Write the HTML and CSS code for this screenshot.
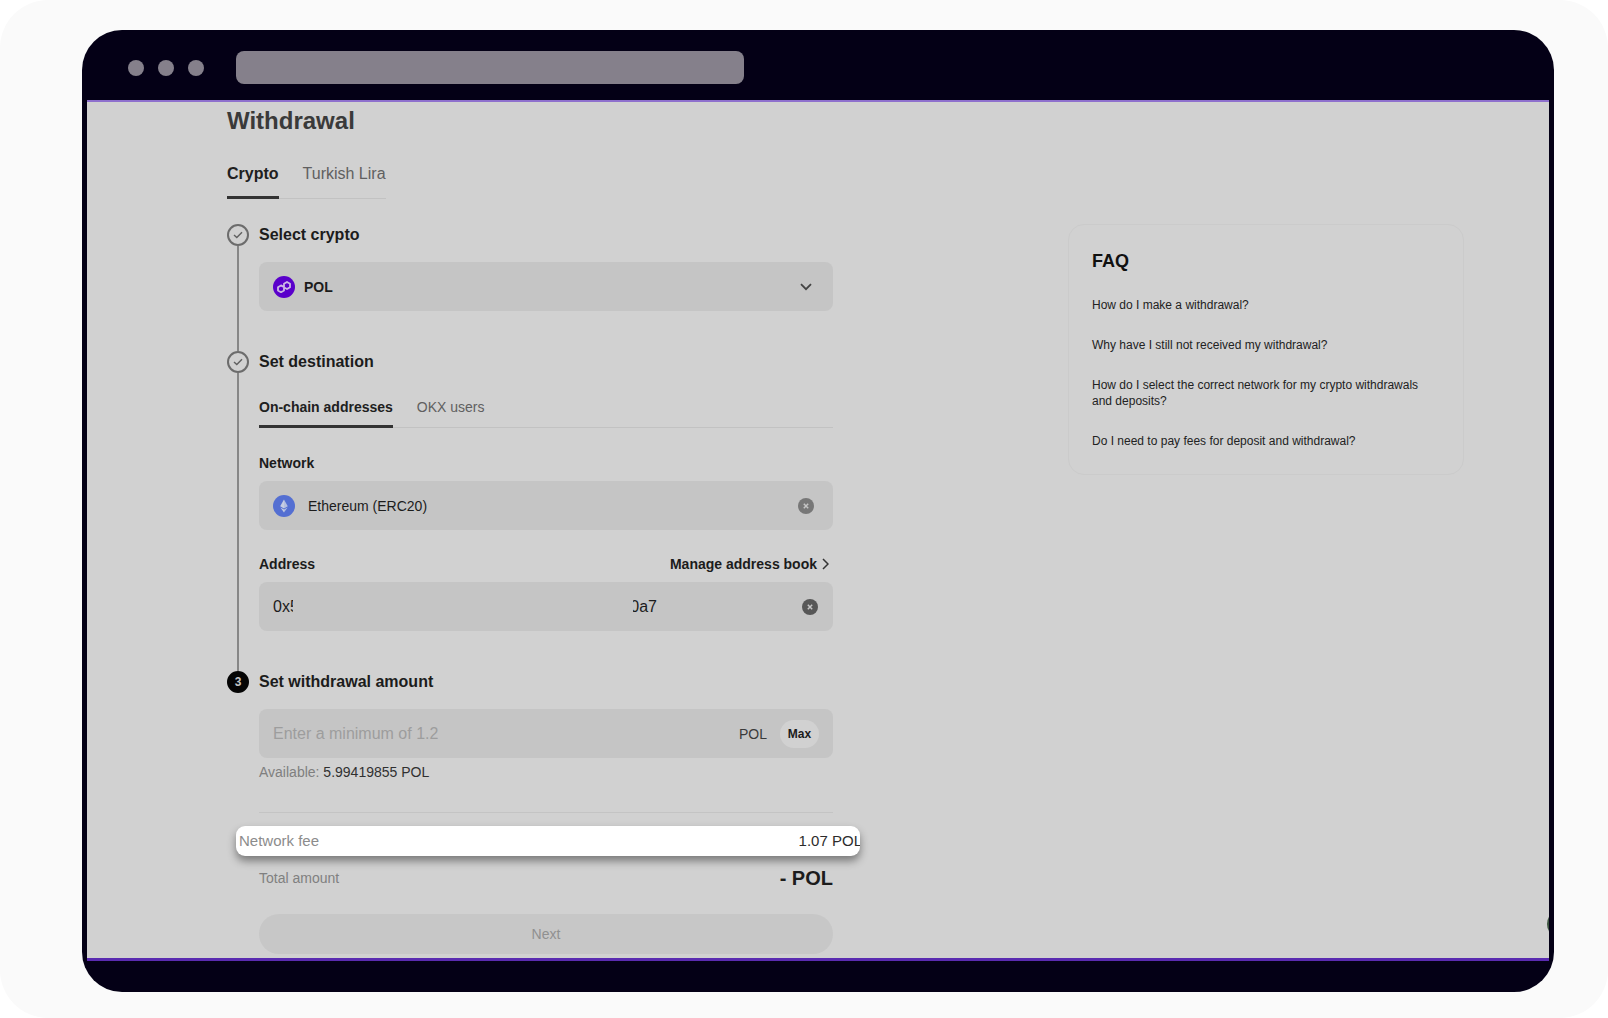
FILE: index.html
```html
<!DOCTYPE html>
<html lang="en">
    <head>
        <meta charset="utf-8">
        <title>Withdrawal</title>
        <link rel="stylesheet" href="styles.css">
    </head>
    <body>
        <div class="backdrop">
            <div class="window">
                <div class="toolbar">
                    <span class="dot"></span>
                    <span class="dot"></span>
                    <span class="dot"></span>
                    <div class="url-bar"></div>
                </div>

                <main class="page">
                    <h1>Withdrawal</h1>
                    <nav class="tabs main-tabs">
                        <a href="#" class="tab active">Crypto</a>
                        <a href="#" class="tab">Turkish Lira</a>
                    </nav>

                    <div class="columns">
                        <form class="steps">
                            <section class="step">
                                <div class="marker">
                                    <span class="circle">
                                        <svg width="10" height="8" viewBox="0 0 10 8"><path d="M1 4l2.8 2.6L9 1.2" fill="none" stroke="#606060" stroke-width="1.4"/></svg>
                                    </span>
                                    <span class="line"></span>
                                </div>
                                <div class="step-body">
                                    <h2><label for="crypto">Select crypto</label></h2>
                                    <div class="field">
                                        <svg width="22" height="22" viewBox="0 0 22 22">
                                            <circle cx="11" cy="11" r="11" fill="#5a00cb"/>
                                            <path d="M10.2 10.6L8 9.4 5 11.2v3.2l3 1.8 3-1.8V7.8L14 6l3 1.8v3.4L14 13l-2.2-1.2" fill="none" stroke="#cdb9e4" stroke-width="1.8" stroke-linejoin="round"/>
                                        </svg>
                                        <select id="crypto" class="crypto-select">
                                            <option>POL</option>
                                        </select>
                                        <svg class="chevron" width="12" height="8" viewBox="0 0 12 8"><path d="M1 1.2l5 5 5-5" fill="none" stroke="#444" stroke-width="1.8"/></svg>
                                    </div>
                                </div>
                            </section>

                            <section class="step">
                                <div class="marker">
                                    <span class="circle">
                                        <svg width="10" height="8" viewBox="0 0 10 8"><path d="M1 4l2.8 2.6L9 1.2" fill="none" stroke="#606060" stroke-width="1.4"/></svg>
                                    </span>
                                    <span class="line"></span>
                                </div>
                                <div class="step-body">
                                    <h2>Set destination</h2>
                                    <nav class="tabs sub-tabs">
                                        <a href="#" class="tab active">On-chain addresses</a>
                                        <a href="#" class="tab">OKX users</a>
                                    </nav>

                                    <div class="label-row">
                                        <label for="network">Network</label>
                                    </div>
                                    <div class="field">
                                        <svg width="22" height="22" viewBox="0 0 22 22">
                                            <circle cx="11" cy="11" r="11" fill="#546fd2"/>
                                            <path d="M11 4.5L7.2 11.2 11 13.4z" fill="#c6cde2"/>
                                            <path d="M11 4.5l3.8 6.7L11 13.4z" fill="#b4bfe0"/>
                                            <path d="M7.4 12.4L11 17.5v-3z" fill="#c6cde2"/>
                                            <path d="M14.6 12.4L11 17.5v-3z" fill="#b4bfe0"/>
                                        </svg>
                                        <input id="network" class="network-input" type="text" value="Ethereum (ERC20)">
                                        <button type="button" class="clear clear-network" aria-label="Clear network">
                                            <svg width="16" height="16" viewBox="0 0 16 16"><circle cx="8" cy="8" r="8" fill="currentColor"/><path d="M5.8 5.8l4.4 4.4M10.2 5.8l-4.4 4.4" stroke="#c5c5c5" stroke-width="1.5"/></svg>
                                        </button>
                                    </div>

                                    <div class="label-row">
                                        <label for="address">Address</label>
                                        <a href="#" class="manage">Manage address book
                                            <svg width="7" height="12" viewBox="0 0 7 12"><path d="M1 1l5 5-5 5" fill="none" stroke="#333" stroke-width="1.5"/></svg>
                                        </a>
                                    </div>
                                    <div class="field">
                                        <input id="address" class="address-start" type="text" value="0x5">
                                        <span class="address-end">0a7</span>
                                        <button type="button" class="clear clear-address" aria-label="Clear address">
                                            <svg width="16" height="16" viewBox="0 0 16 16"><circle cx="8" cy="8" r="8" fill="currentColor"/><path d="M5.8 5.8l4.4 4.4M10.2 5.8l-4.4 4.4" stroke="#c5c5c5" stroke-width="1.5"/></svg>
                                        </button>
                                    </div>
                                </div>
                            </section>

                            <section class="step last">
                                <div class="marker">
                                    <span class="circle current">3</span>
                                </div>
                                <div class="step-body">
                                    <h2><label for="amount">Set withdrawal amount</label></h2>
                                    <div class="field">
                                        <input id="amount" class="amount-input" type="text" placeholder="Enter a minimum of 1.2">
                                        <span class="unit">POL</span>
                                        <button type="button" class="max">Max</button>
                                    </div>
                                    <p class="available">Available: <strong>5.99419855 POL</strong></p>

                                    <div class="fee">
                                        <span>Network fee</span>
                                        <span class="fee-value">1.07 POL</span>
                                    </div>
                                    <div class="total">
                                        <span>Total amount</span>
                                        <strong>- POL</strong>
                                    </div>
                                    <button type="button" class="next">Next</button>
                                </div>
                            </section>
                        </form>

                        <aside class="faq">
                            <h3>FAQ</h3>
                            <a href="#">How do I make a withdrawal?</a>
                            <a href="#">Why have I still not received my withdrawal?</a>
                            <a href="#">How do I select the correct network for my crypto withdrawals and deposits?</a>
                            <a href="#">Do I need to pay fees for deposit and withdrawal?</a>
                        </aside>
                    </div>
                    <span class="chat-bubble"></span>
                </main>
            </div>
        </div>
    </body>
</html>
```
FILE: styles.css
```css
* {
    box-sizing: border-box;
}
body {
    margin: 0;
    background: #fff;
    color: #1c1c1c;
    font-family: "Liberation Sans", Arial, Helvetica, sans-serif;
    font-size: 14px;
    line-height: 20px;
}
h1, h2, h3, p {
    margin: 0;
}
a {
    color: inherit;
    text-decoration: none;
}
input, select, button {
    font: inherit;
    color: inherit;
    background: none;
    border: 0;
    padding: 0;
    min-width: 0;
}
svg {
    display: block;
    flex: none;
}
.backdrop {
    background: #fafafa;
    border-radius: 48px;
    padding: 30px 54px 26px 82px;
}

/* browser window */
.window {
    background: #040016;
    border-radius: 40px;
    padding: 0 5px 31px;
}
.toolbar {
    display: flex;
    align-items: center;
    gap: 14px;
    height: 70px;
    padding: 5px 41px 0;
}
.dot {
    width: 16px;
    height: 16px;
    border-radius: 50%;
    background: #85808b;
}
.url-bar {
    width: 508px;
    height: 33px;
    margin-left: 18px;
    border-radius: 8px;
    background: #85808b;
}
.page {
    position: relative;
    overflow: hidden;
    background: #d1d1d1;
    border-top: 2px solid #8e70cd;
    border-bottom: 3px solid #5a2bb0;
    padding: 5px 85px 4px 140px;
}
h1 {
    font-size: 24px;
    line-height: 28px;
    font-weight: 600;
    color: #3a3a3a;
}

/* tabs */
.tabs {
    display: flex;
    gap: 24px;
    box-shadow: inset 0 -1px #c2c2c2;
    color: #606060;
}
.tab {
    border-bottom: 3px solid transparent;
}
.tab.active {
    border-color: #333;
    color: #202020;
    font-weight: 600;
}
.main-tabs {
    width: fit-content;
    margin: 29px 0 25px;
    font-size: 16px;
}
.main-tabs .tab {
    padding-bottom: 12px;
}
.sub-tabs {
    margin: 23px 0 25px;
}
.sub-tabs .tab {
    padding: 1px 0 8px;
}

.columns {
    display: grid;
    grid-template-columns: minmax(0, 606px) minmax(0, 396px);
    justify-content: space-between;
    align-items: start;
    gap: 40px;
}

/* steps */
.step {
    display: grid;
    grid-template-columns: 22px 1fr;
    gap: 10px;
}
.step-body {
    min-width: 0;
    padding-bottom: 40px;
}
.last .step-body {
    padding-bottom: 0;
}
.marker {
    display: flex;
    flex-direction: column;
    align-items: center;
}
.circle {
    display: flex;
    align-items: center;
    justify-content: center;
    flex: none;
    width: 22px;
    height: 22px;
    border: 2px solid #6c6c6c;
    border-radius: 50%;
    font-size: 12px;
    font-weight: 600;
}
.circle.current {
    background: #050505;
    border-color: #050505;
    color: #c5c5c5;
}
.line {
    flex: 1;
    width: 2px;
    background: #878787;
}
h2 {
    margin-bottom: 16px;
    font-size: 16px;
    line-height: 22px;
    font-weight: 600;
}
.field {
    display: flex;
    align-items: center;
    height: 49px;
    padding: 0 14px;
    border-radius: 8px;
    background: #c5c5c5;
}
.crypto-select {
    flex: 1;
    margin-left: 9px;
    appearance: none;
    font-weight: 600;
}
.chevron {
    margin-right: 7px;
}
.label-row {
    display: flex;
    justify-content: space-between;
    margin-bottom: 8px;
    font-weight: 600;
}
.field + .label-row {
    margin-top: 24px;
}
.network-input {
    flex: 1;
    margin-left: 13px;
}
.clear {
    color: #777;
}
.clear-network {
    margin-right: 5px;
}
.clear-address {
    margin-left: 145px;
    margin-right: 1px;
    color: #575757;
}
.manage {
    display: flex;
    align-items: center;
    gap: 5px;
    padding-right: 4px;
}
/* both ends of the address are cut off around the hidden middle */
.address-start {
    width: 20px;
    font-size: 16px;
}
.address-end {
    display: flex;
    justify-content: flex-end;
    width: 24px;
    margin-left: auto;
    overflow: hidden;
    font-size: 16px;
}
.amount-input {
    flex: 1;
    font-size: 16px;
}
.amount-input::placeholder {
    color: #9d9d9d;
}
.unit {
    margin-right: 13px;
    color: #3a3a3a;
}
.max {
    width: 39px;
    height: 28px;
    border-radius: 14px;
    background: #d1d1d1;
    font-size: 12px;
    font-weight: 600;
}
.available {
    padding: 4px 0 30px;
    border-bottom: 1px solid #c4c4c4;
    color: #7f7f7f;
}
.available strong {
    color: #303030;
    font-weight: 400;
}

/* highlighted row */
.fee {
    display: flex;
    align-items: center;
    justify-content: space-between;
    height: 30px;
    margin: 13px -27px 10px -23px;
    padding-left: 3px;
    border-radius: 9px;
    overflow: hidden;
    background: #fff;
    box-shadow: 0 5px 8px rgba(0, 0, 0, 0.42);
    font-size: 15px;
    color: #8c8c8c;
}
.fee-value {
    margin-right: -2px;
    color: #2c2c2c;
}
.total {
    display: flex;
    align-items: center;
    justify-content: space-between;
    color: #808080;
}
.total strong {
    font-size: 20px;
    line-height: 24px;
    color: #1c1c1c;
}
.next {
    display: block;
    width: 100%;
    height: 40px;
    margin-top: 24px;
    border-radius: 20px;
    background: #c7c7c7;
    color: #909090;
}

.faq {
    display: flex;
    flex-direction: column;
    gap: 24px;
    padding: 24px 23px 25px;
    border: 1px solid #cbcbcb;
    border-radius: 16px;
    font-size: 12px;
    line-height: 16px;
    color: #222;
}
h3 {
    font-size: 18px;
    line-height: 24px;
    font-weight: 700;
    color: #101010;
}

/* chat button peeking in from the right edge */
.chat-bubble {
    position: absolute;
    right: -26px;
    bottom: 20px;
    width: 28px;
    height: 28px;
    border-radius: 50%;
    background: #3d5540;
}
```
